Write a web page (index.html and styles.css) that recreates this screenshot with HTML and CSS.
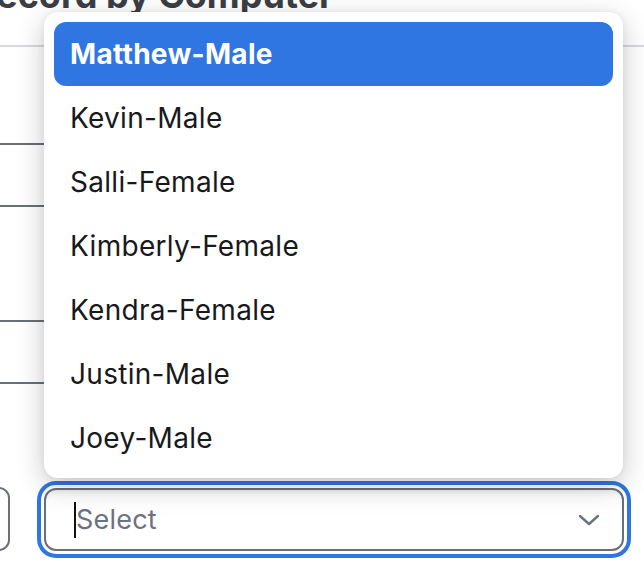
FILE: index.html
```html
<!DOCTYPE html>
<html>
<head>
<meta charset="utf-8">
<link rel="stylesheet" href="styles.css">
</head>
<body>
<div class="page">
  <div class="head-area">
    <h2 class="heading">Record by Computer</h2>
  </div>
  <div class="divider"></div>
  <div class="fields">
    <div class="field field-a"></div>
    <div class="field field-b"></div>
    <div class="field field-c"></div>
  </div>
  <div class="bottom-row">
    <div class="side-box"></div>
    <div class="select">
      <span class="caret"></span>
      <span class="placeholder">Select</span>
      <svg class="chevron" width="22" height="12" viewBox="0 0 22 12"><path d="M2 2 L11 10 L20 2" fill="none" stroke="#6b7280" stroke-width="2.4" stroke-linecap="round" stroke-linejoin="round"/></svg>
    </div>
  </div>
  <ul class="menu">
    <li class="item active">Matthew-Male</li>
    <li class="item">Kevin-Male</li>
    <li class="item">Salli-Female</li>
    <li class="item">Kimberly-Female</li>
    <li class="item">Kendra-Female</li>
    <li class="item">Justin-Male</li>
    <li class="item">Joey-Male</li>
  </ul>
</div>
</body>
</html>
```
FILE: styles.css
```css
* { box-sizing: border-box; }
html, body { margin: 0; padding: 0; background: #fff; }
body { font-family: Inter, "Noto Sans", "Liberation Sans", sans-serif; }
.page {
  position: relative;
  width: 644px;
  height: 570px;
  overflow: hidden;
  background: #fff;
  display: flow-root;
}
.head-area { height: 45px; display: flow-root; }
.heading {
  margin: -25px 0 0 -27px;
  font-size: 36px;
  line-height: 40px;
  font-weight: 700;
  color: #3b3e45;
  white-space: nowrap;
}
.divider { height: 2px; background: #d9dadd; }
.fields { margin-left: -120px; width: 200px; }
.field { border-color: #6b6f78; border-style: solid; border-width: 0; }
.field-a { height: 98px; border-bottom-width: 2px; }
.field-b { height: 117px; margin-top: 60px; border-top-width: 2px; border-bottom-width: 2px; }
.field-c { height: 105px; margin-top: 60px; border-top-width: 2px; }
.bottom-row { display: flex; align-items: flex-start; gap: 34px; }
.side-box {
  width: 70px;
  height: 64px;
  margin-left: -60px;
  border: 2px solid #6b6f78;
  border-radius: 11px;
}
.select {
  width: 580px;
  height: 63px;
  margin-top: 1px;
  border: 2px solid #6b6f78;
  border-radius: 12px;
  display: flex;
  align-items: center;
  padding: 0 22px 0 28px;
  background: #fff;
  box-shadow: 0 0 0 3px #fff, 0 0 0 7px #2f76e3, inset 0 5px 6px -3px rgba(0,0,0,0.08);
}
.caret { width: 2px; height: 36px; background: #111; }
.placeholder {
  flex: 1;
  font-size: 27px;
  letter-spacing: 0.2px;
  color: #6b7280;
}
.chevron { display: block; }
.menu {
  position: absolute;
  left: 44px;
  top: 12px;
  width: 579px;
  height: 466px;
  margin: 0;
  padding: 10px 10px 8px;
  list-style: none;
  background: #fff;
  border-radius: 14px;
  box-shadow: 0 8px 28px rgba(0,0,0,0.22), 0 0 6px rgba(0,0,0,0.06);
}
.item {
  height: 64px;
  display: flex;
  align-items: center;
  padding-left: 16px;
  font-size: 28px;
  letter-spacing: 0.3px;
  color: #18191c;
  border-radius: 12px;
}
.item.active {
  background: #2f76e3;
  color: #fff;
  font-weight: 700;
}
```
